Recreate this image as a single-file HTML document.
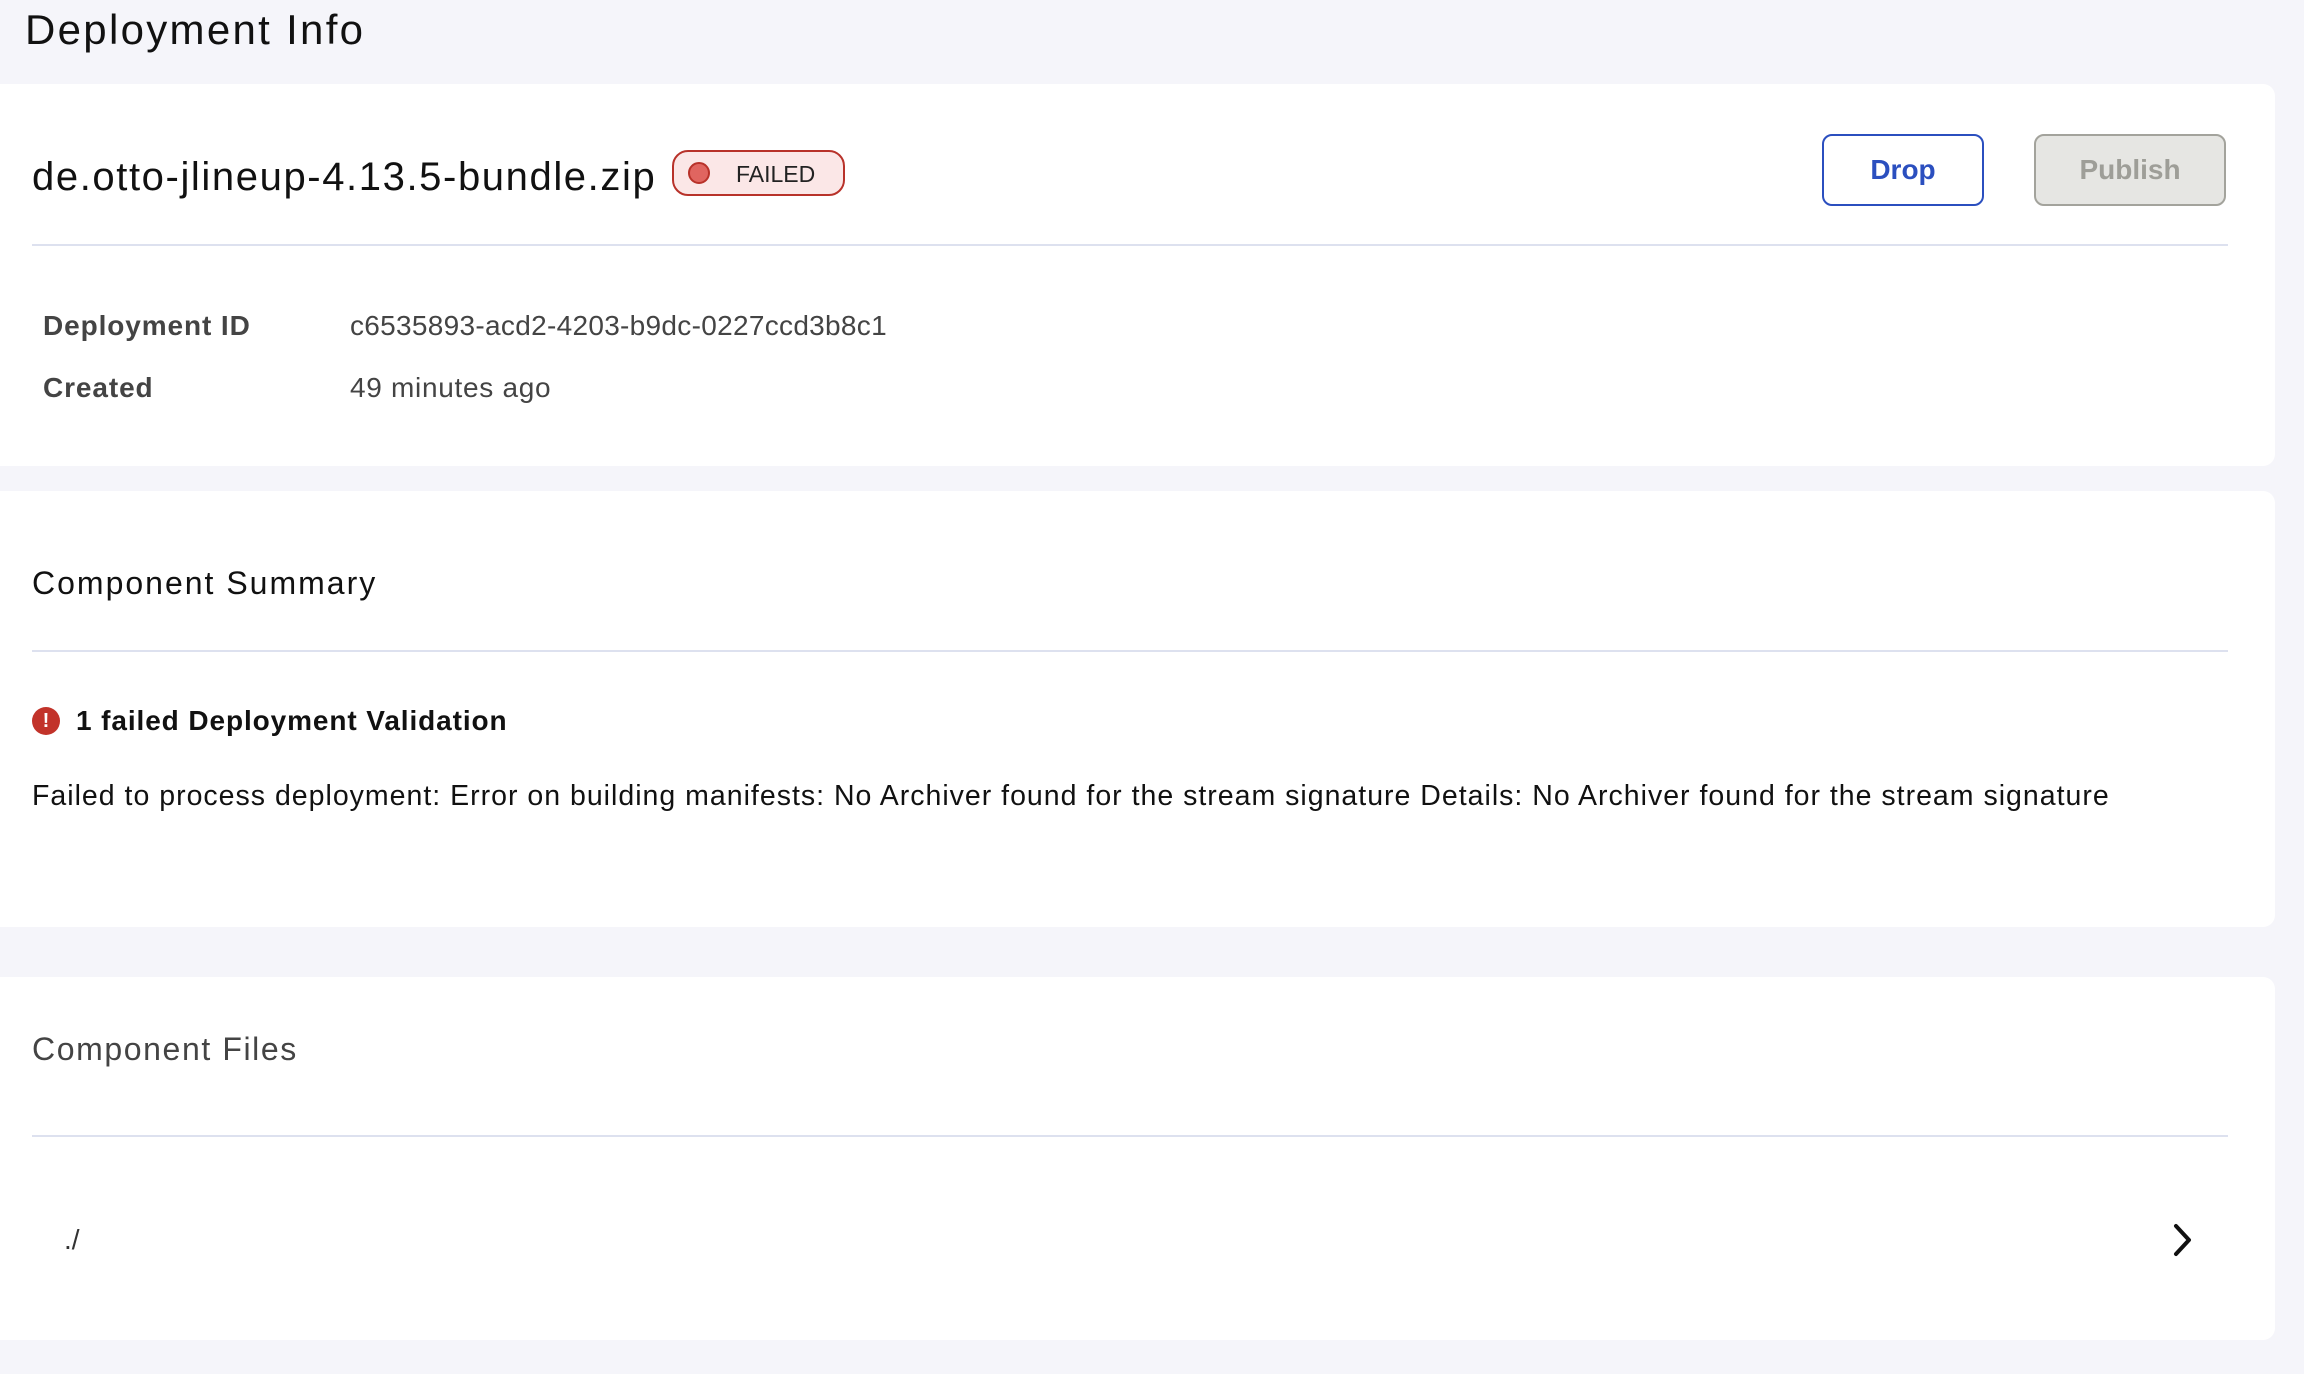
<!DOCTYPE html>
<html><head><meta charset="utf-8"><style>
*{box-sizing:border-box;margin:0;padding:0}
body{width:2304px;height:1374px;background:#f5f5fa;font-family:"Liberation Sans",sans-serif;color:#111;position:relative;overflow:hidden}
.abs{position:absolute;white-space:nowrap}
.card{position:absolute;left:0;width:2275px;background:#fff;border-radius:0 12px 12px 0}
.hr{position:absolute;left:32px;width:2196px;height:2px;background:#dde1ef}
</style></head><body>
<div class="abs" style="left:25px;top:2px;font-size:42px;line-height:56px;letter-spacing:2.3px">Deployment Info</div>

<div class="card" style="top:84px;height:382px">
  <div class="abs" style="left:32px;top:58px;font-size:40px;line-height:70px;letter-spacing:1.6px">de.otto-jlineup-4.13.5-bundle.zip</div>
  <div class="abs" style="left:672px;top:66px;width:173px;height:46px;border:2px solid #b8322a;border-radius:16px;background:#fbe7e7">
    <div class="abs" style="left:14px;top:10px;width:22px;height:22px;border-radius:50%;background:#e06560;border:2px solid #b8322a"></div>
    <div class="abs" style="left:62px;top:6px;font-size:23px;line-height:32px;color:#222">FAILED</div>
  </div>
  <div class="abs" style="left:1822px;top:50px;width:162px;height:72px;border:2px solid #2b4fbf;border-radius:10px;color:#2b4fbf;font-weight:bold;font-size:28px;text-align:center;line-height:68px">Drop</div>
  <div class="abs" style="left:2034px;top:50px;width:192px;height:72px;border:2px solid #a3a39c;border-radius:10px;background:#e6e6e3;color:#9e9e98;font-weight:bold;font-size:28px;text-align:center;line-height:68px">Publish</div>
  <div class="hr" style="top:160px"></div>
  <div class="abs" style="left:43px;top:224px;font-size:28px;line-height:36px;font-weight:bold;color:#444;letter-spacing:0.9px">Deployment ID</div>
  <div class="abs" style="left:350px;top:224px;font-size:28px;line-height:36px;color:#444;letter-spacing:0.3px">c6535893-acd2-4203-b9dc-0227ccd3b8c1</div>
  <div class="abs" style="left:43px;top:286px;font-size:28px;line-height:36px;font-weight:bold;color:#444;letter-spacing:0.9px">Created</div>
  <div class="abs" style="left:350px;top:286px;font-size:28px;line-height:36px;color:#444;letter-spacing:0.7px">49 minutes ago</div>
</div>

<div class="card" style="top:491px;height:436px">
  <div class="abs" style="left:32px;top:72px;font-size:32px;line-height:40px;letter-spacing:2px">Component Summary</div>
  <div class="hr" style="top:159px"></div>
  <div class="abs" style="left:32px;top:216px;width:28px;height:28px;border-radius:50%;background:#c2332a;color:#fff;font-weight:bold;font-size:20px;text-align:center;line-height:28px">!</div>
  <div class="abs" style="left:76px;top:212px;font-size:28px;line-height:36px;font-weight:bold;letter-spacing:0.9px">1 failed Deployment Validation</div>
  <div class="abs" style="left:32px;top:287px;font-size:28.5px;line-height:36px;letter-spacing:1px">Failed to process deployment: Error on building manifests: No Archiver found for the stream signature Details: No Archiver found for the stream signature</div>
</div>

<div class="card" style="top:977px;height:363px">
  <div class="abs" style="left:32px;top:52px;font-size:32px;line-height:40px;color:#444;letter-spacing:1.6px">Component Files</div>
  <div class="hr" style="top:158px"></div>
  <div class="abs" style="left:64px;top:245px;font-size:28px;line-height:36px;color:#333">./</div>
  <svg class="abs" style="left:2170px;top:246px" width="26" height="34" viewBox="0 0 26 34"><path d="M6 3 L19 17 L6 31" fill="none" stroke="#111" stroke-width="4" stroke-linecap="round" stroke-linejoin="round"/></svg>
</div>
</body></html>
